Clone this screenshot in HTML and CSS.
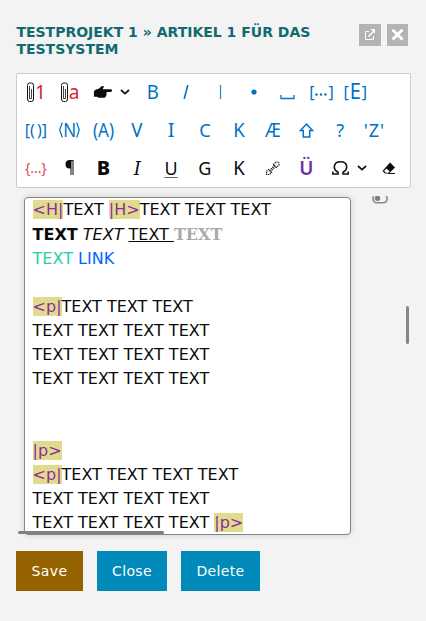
FILE: index.html
```html
<!DOCTYPE html>
<html lang="de">
<head>
<meta charset="utf-8">
<title>Artikel 1</title>
<link rel="stylesheet" href="styles.css">
</head>
<body>
<header class="header">
  <h1 class="title">TESTPROJEKT 1 » ARTIKEL 1 FÜR DAS TESTSYSTEM</h1>
  <div class="window-actions">
    <button class="win-btn" aria-label="Open"><svg width="22" height="22" viewBox="0 0 22 22" fill="none" stroke="#fff"><path d="M10 7.500H6.500v8h8V12"/><path d="M9.500 12.500 15 7" stroke-width="1.400"/><path d="M11.500 5H16v4.500z" fill="#fff" stroke="none"/></svg></button>
    <button class="win-btn narrow" aria-label="Close"><svg width="21" height="22" viewBox="0 0 21 22" fill="none" stroke="#fff" stroke-width="3"><path d="m5.500 5.700 10 9.800M15.500 5.700l-10 9.800"/></svg></button>
  </div>
</header>
<div class="toolbar">
  <div class="row">
    <button class="tool clipped"><svg class="clip" viewBox="0 0 9 21" fill="none" stroke="#111"><path d="M1.500 5v12q0 2.500 2 2.500h2q2 0 2-2.500V3.500q0-2.500-2-2.500h-2q-2 0-2 2.500z"/><path d="M3.500 4v12.500h2V7" stroke-width=".8"/></svg><span class="red">1</span></button>
    <button class="tool clipped"><svg class="clip" viewBox="0 0 9 21" fill="none" stroke="#111"><path d="M1.500 5v12q0 2.500 2 2.500h2q2 0 2-2.500V3.500q0-2.500-2-2.500h-2q-2 0-2 2.500z"/><path d="M3.500 4v12.500h2V7" stroke-width=".8"/></svg><span class="red">a</span></button>
    <button class="tool drop hand"><svg width="20" height="15" viewBox="0 0 21 15"><path fill="#0b0b0b" d="M1 6Q3 4 6 3.500L9 1q2-1 2.500.5L10 4h8.500q1.500 0 1.500 1.500T18.500 7H14q1 .8 0 2 .8 1.200-.3 2-.1 1.600-1.700 2H7q-2 0-3-1H1z"/></svg><svg class="chev" viewBox="0 0 10 6"><path d="m1 1 4 3.600L9 1"/></svg></button>
    <button class="tool blue thin">B</button>
    <button class="tool"><svg width="6" height="14"><path d="M4.800 0 1.200 14" stroke="#0072c6" stroke-width="1.600"/></svg></button>
    <button class="tool"><svg width="3" height="14"><path d="M1.500 0v14" stroke="#2087cc" stroke-width="1.200"/></svg></button>
    <button class="tool"><svg width="6" height="6"><circle cx="3" cy="3" r="2.600" fill="#0072c6"/></svg></button>
    <button class="tool space"><svg width="15" height="5" fill="none" stroke="#0072c6" stroke-width="1.300"><path d="M1 0v3.500h13V0"/></svg></button>
    <button class="tool blue brackets">[<svg class="dots" width="12" height="3" fill="#0072c6"><circle cx="1.500" cy="1.500" r="1.200"/><circle cx="6" cy="1.500" r="1.200"/><circle cx="10.500" cy="1.500" r="1.200"/></svg>]</button>
    <button class="tool blue brackets">[<span class="inner">E</span>]</button>
  </div>
  <div class="row">
    <button class="tool blue brackets parens"><span>[</span><span>(</span><span class="right">)</span><span>]</span></button>
    <button class="tool blue angle"><svg width="4" height="16" fill="none" stroke="#0072c6" stroke-width="1.200"><path d="M3.300.5.700 8l2.600 7.500"/></svg><span class="enn">N</span><svg width="4" height="16" fill="none" stroke="#0072c6" stroke-width="1.200"><path d="M.7.500 3.300 8 .7 15.500"/></svg></button>
    <button class="tool blue par">(A)</button>
    <button class="tool blue thin">V</button>
    <button class="tool blue">I</button>
    <button class="tool blue small">C</button>
    <button class="tool blue thin">K</button>
    <button class="tool blue ae">Æ</button>
    <button class="tool"><svg width="15" height="15" viewBox="0 0 14 14" fill="none" stroke="#0072c6" stroke-width="1.400"><path d="m7 1 5.700 6H10v6H4V7H1.300z"/></svg></button>
    <button class="tool blue small">?</button>
    <button class="tool blue quoted"><span>'</span>Z<span>'</span></button>
  </div>
  <div class="row">
    <button class="tool red braces">{<span>...</span>}</button>
    <button class="tool pilcrow"><svg width="9" height="15" viewBox="0 0 9 15"><path fill="#0b0b0b" d="M8.500 0v15H7.500V1h-1v14h-1V8.500Q.5 9 .5 4.300.5 0 5 0z"/></svg></button>
    <button class="tool bold">B</button>
    <button class="tool serif-i">I</button>
    <button class="tool small under">U</button>
    <button class="tool small">G</button>
    <button class="tool thin">K</button>
    <button class="tool"><svg width="15" height="15" viewBox="0 0 15 15" fill="none" stroke="#161616" stroke-width="1.100" stroke-dasharray="1.300 .7"><path d="M1.500 10.500 3.500 8.500 6.500 11.500 4.500 13.500H1.500zM8.500 3.500l2.500-2.500h2l1 1v2l-2.500 2.500zM4.500 9.500l5-5M5.500 10.500l5-5"/></svg></button>
    <button class="tool umlaut">Ü</button>
    <button class="tool drop last"><svg width="17" height="14" viewBox="0 0 17 14" fill="none" stroke="#111" stroke-width="1.600"><path d="M.7 10.500V13H6v-1.800Q2.300 9.300 2.300 5.800 2.500.8 8.500.8t6.200 5q0 3.500-3.700 5.400V13h5.300v-2.500"/></svg><svg class="chev" viewBox="0 0 10 6"><path d="m1 1 4 3.600L9 1"/></svg></button>
    <button class="tool eraser"><svg width="14" height="13" viewBox="0 0 14 13"><path fill="#0b0b0b" d="m8 .5 5 5-6 6H3L.5 9z"/><path fill="#fff" d="m2.200 8.800 2.300-2.300 3.200 3-1.300 1.300H3.700z"/><path d="M6 11.500h7" stroke="#111"/></svg></button>
  </div>
</div>
<main class="content">
  <div class="editor">
    <p><mark>&lt;H|</mark>TEXT <mark>|H&gt;</mark>TEXT TEXT TEXT</p>
    <p class="styled"><b>TEXT</b> <i>TEXT</i> <u>TEXT </u><span class="gray">TEXT</span></p>
    <p><span class="green">TEXT</span> <a class="link">LINK</a></p>
    <p><br></p>
    <p><mark>&lt;p|</mark>TEXT TEXT TEXT</p>
    <p>TEXT TEXT TEXT TEXT</p>
    <p>TEXT TEXT TEXT TEXT</p>
    <p>TEXT TEXT TEXT TEXT</p>
    <p><br></p>
    <p><br></p>
    <p><mark>|p&gt;</mark></p>
    <p><mark>&lt;p|</mark>TEXT TEXT TEXT TEXT</p>
    <p>TEXT TEXT TEXT TEXT</p>
    <p>TEXT TEXT TEXT TEXT <mark>|p&gt;</mark></p>
  </div>
  <div class="side"><svg width="16" height="8" viewBox="0 0 16 8"><path d="M2 0Q.8 1 .9 2.500 1.500 6.800 5 6.800h6q3.800 0 4.200-4.300Q15.200 1 14 0" fill="none" stroke="#888" stroke-width="1.600"/><circle cx="5.500" cy="2.300" r="2.700" fill="#808080"/></svg></div>
  <div class="scroll-x"></div>
  <div class="scroll-y"></div>
</main>
<footer class="footer">
  <button class="btn save">Save</button>
  <button class="btn close">Close</button>
  <button class="btn delete">Delete</button>
</footer>
</body>
</html>
```

FILE: styles.css
```css
* { box-sizing: border-box; }
body {
  margin: 0;
  height: 621px;
  padding: 24px 15px 0 16px;
  overflow: hidden;
  background: #f3f3f3;
  color: #0b0b0b;
  font-family: "DejaVu Sans", sans-serif;
}
button { border: 0; padding: 0; background: none; color: inherit; font: inherit; }
svg { display: block; flex: none; }
.header { display: flex; justify-content: space-between; height: 49px; }
.title { margin: 0; width: 325px; font-size: 14px; line-height: 17px; font-weight: 700; color: #116a70; padding-left: .4px; }
.window-actions { display: flex; gap: 6px; margin-right: 3px; }
.win-btn { width: 22px; height: 22px; background: #b3b3b3; }
.win-btn.narrow { width: 21px; }

.toolbar {
  height: 115px;
  padding: 0 2px;
  background: #fff;
  border: 1px solid #ccc;
  border-radius: 2px;
  font-family: "Noto Sans", sans-serif;
}
.row { display: flex; height: 38px; }
.tool { display: flex; align-items: center; justify-content: center; flex: none; width: 33.800px; height: 36px; font-size: 20px; line-height: 36px; white-space: nowrap; }
.drop { width: 49px; gap: 7px; }
.last { gap: 8px; width: 52px; }
.eraser { width: 28px; }
.chev { width: 10px; height: 6px; fill: none; stroke: #111; stroke-width: 1.700; }
.clip { width: 9px; height: 21px; }
.clipped { font-size: 19px; }
.blue { color: #0072c6; }
.red { color: #d9232e; }
.thin { transform: scaleX(.93); }
.small { font-size: 18px; }
.space { padding-top: 10px; }
.brackets { font-size: 16px; gap: 1px; }
.dots { margin-top: 5px; }
.inner { font-size: 20px; transform: scaleY(1.050); }
.parens { gap: 0; }
.right { margin-left: 2px; }
.angle { font-size: 17px; }
.enn { transform: scaleY(1.120); }
.par { font-size: 17px; transform: scaleY(1.120); }
.ae { transform: scaleX(.9); }
.quoted { font-size: 18px; gap: 1px; }
.braces { font-size: 14px; color: #dd4a54; }
.pilcrow { padding-bottom: 2px; }
.bold { font-weight: 800; }
.serif-i { font: italic 18px "DejaVu Serif", serif; }
.under { text-decoration: underline #666; text-decoration-thickness: 1px; text-underline-offset: 2px; }
.umlaut { font-weight: 600; color: #7030a0; font-size: 19px; }

.content { position: relative; display: flex; gap: 21px; height: 348px; padding: 9px 0 0 8px; }
.editor {
  width: 327px;
  height: 338px;
  padding: 0 7px 0 7.600px;
  overflow: hidden;
  background: #fff;
  border: 1px solid #858585;
  border-radius: 4px;
  box-shadow: 0 0 6px rgba(0, 0, 0, .15);
  font-size: 16px;
}
.editor p { margin: 0; height: 24px; line-height: 24px; white-space: nowrap; }
.editor .styled { height: 25px; line-height: 26px; }
mark { background: #e0dc8c; color: #8e2ba6; }
.gray { font-family: "DejaVu Serif", serif; font-weight: 700; color: #aaa; }
.green { color: #1fd0a5; }
.link { color: #06f; }
.side { margin-top: -1px; }
.scroll-x { position: absolute; left: 1.500px; bottom: 2px; width: 146px; height: 3px; border-radius: 2px; background: #808080; }
.scroll-y { position: absolute; right: 2px; top: 118px; width: 3px; height: 38px; border-radius: 2px; background: #858786; }

.footer { display: flex; gap: 14px; padding-top: 15px; }
.btn { height: 40px; color: #fff; font-size: 14px; letter-spacing: .35px; }
.save { width: 67px; background: #946300; }
.close { width: 70px; background: #008aba; }
.delete { width: 79px; background: #008aba; }
```
